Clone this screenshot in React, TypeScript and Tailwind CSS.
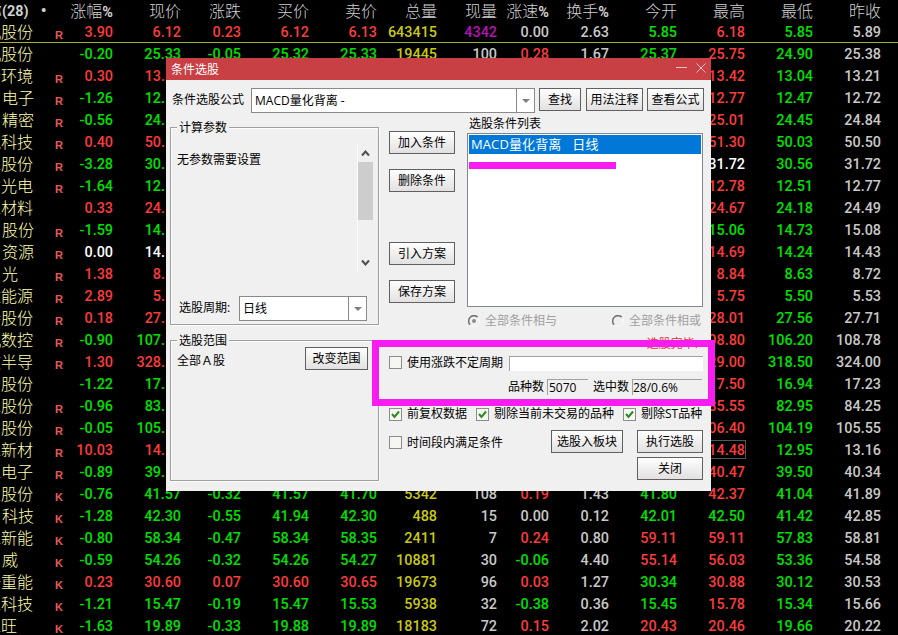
import React from 'react';
import { clsx, type ClassValue } from 'clsx';
import { twMerge } from 'tailwind-merge';

function cn(...inputs: ClassValue[]) {
  return twMerge(clsx(inputs));
}

const GRID =
  'grid grid-cols-[34px_29px_50px_68px_60px_68px_68px_60px_60px_52px_60px_68px_68px_68px_68px]';

const HEADERS = ['现价', '涨跌', '买价', '卖价', '总量', '现量', '涨速%', '换手%', '今开', '最高', '最低', '昨收'];

// name, mark, change %, price, high, low, previous close,
// then [change, bid, ask, volume, last volume, speed %, turnover %, open]
type Row = [string, string, string, string, string, string, string, string[]?];

const ROWS: Row[] = [
  ['机股份', 'R', '3.90', '6.12', '6.18', '5.85', '5.89', ['0.23', '6.12', '6.13', '643415', '4342', '0.00', '2.63', '5.85']],
  ['机股份', '', '-0.20', '25.33', '25.75', '24.90', '25.38', ['-0.05', '25.32', '25.33', '19445', '100', '0.28', '1.67', '25.37']],
  ['士环境', 'R', '0.30', '13.25', '13.42', '13.04', '13.21'],
  ['电子', 'R', '-1.26', '12.56', '12.77', '12.47', '12.72'],
  ['精密', 'R', '-0.56', '24.70', '25.01', '24.45', '24.84'],
  ['气科技', 'R', '0.40', '50.70', '51.30', '50.03', '50.50'],
  ['工股份', 'R', '-3.28', '30.68', '31.72', '30.56', '31.72'],
  ['才光电', 'R', '-1.64', '12.56', '12.78', '12.51', '12.77'],
  ['工材料', '', '0.33', '24.57', '24.67', '24.18', '24.49'],
  ['股份', 'R', '-1.59', '14.84', '15.06', '14.73', '15.08'],
  ['资源', 'R', '0.00', '14.43', '14.69', '14.24', '14.43'],
  ['光', 'R', '1.38', '8.84', '8.84', '8.63', '8.72'],
  ['达能源', 'R', '2.89', '5.69', '5.75', '5.50', '5.53'],
  ['特股份', 'R', '0.18', '27.76', '28.01', '27.56', '27.71'],
  ['机数控', 'R', '-0.90', '107.80', '108.80', '106.20', '108.78'],
  ['文半导', 'R', '1.30', '328.20', '329.00', '318.50', '324.00'],
  ['宁股份', '', '-1.22', '17.02', '17.50', '16.94', '17.23'],
  ['工股份', 'R', '-0.96', '83.44', '85.55', '82.95', '84.25'],
  ['方股份', 'R', '-0.05', '105.50', '106.40', '104.19', '105.55'],
  ['工新材', 'R', '10.03', '14.48', '14.48', '12.95', '13.16'],
  ['工电子', 'R', '-0.89', '39.98', '40.47', '39.50', '40.34'],
  ['业股份', 'K', '-0.76', '41.57', '42.37', '41.04', '41.89', ['-0.32', '41.57', '41.70', '5342', '108', '0.19', '1.43', '41.80']],
  ['科技', 'K', '-1.28', '42.30', '42.50', '41.42', '42.85', ['-0.55', '41.94', '42.30', '488', '15', '0.00', '0.12', '42.01']],
  ['工新能', 'K', '-0.80', '58.34', '59.11', '57.83', '58.81', ['-0.47', '58.34', '58.35', '2411', '7', '0.24', '0.80', '59.11']],
  ['威', 'K', '-0.59', '54.26', '56.03', '53.36', '54.58', ['-0.32', '54.26', '54.27', '10881', '30', '-0.06', '4.40', '55.14']],
  ['一重能', 'K', '0.23', '30.60', '30.88', '30.12', '30.53', ['0.07', '30.60', '30.65', '19673', '96', '0.03', '1.27', '30.34']],
  ['工科技', 'K', '-1.21', '15.47', '15.78', '15.34', '15.66', ['-0.19', '15.47', '15.53', '5938', '32', '-0.38', '0.36', '15.45']],
  ['工旺', 'K', '-1.63', '19.89', '20.46', '19.66', '20.22', ['-0.33', '19.88', '19.89', '18183', '72', '0.15', '2.02', '20.43']],
];

const GREY = 'text-[#c8c8c8]';

function tone(value: string, base = '0') {
  const diff = parseFloat(value) - parseFloat(base);
  if (diff > 0) return 'text-[#fa3c3c]';
  if (diff < 0) return 'text-[#00e000]';
  return 'text-white';
}

function Cell({ value, className }: { value?: string; className?: string }) {
  return <div className={cn('text-right', className)}>{value}</div>;
}

function QuoteRow({ row, first }: { row: Row; first: boolean }) {
  const [name, mark, pct, price, high, low, prev, rest] = row;
  const [chg, bid, ask, vol, last, speed, turnover, open] = rest ?? [];
  const short = name.length < 3 && name !== '工旺';
  return (
    <div className={cn(GRID, 'relative h-[22px] leading-6')}>
      <div className="overflow-hidden text-base leading-6 font-light text-[#ffffb0]">
        <div className={cn('whitespace-nowrap', short ? 'pl-0.5' : '-ml-[15px]')}>{name}</div>
      </div>
      <div className="pt-[3px] text-right font-['Liberation_Sans'] text-[11px] leading-[22px] font-bold text-[#e65a5a]">{mark}</div>
      <Cell value={pct} className={tone(pct)} />
      {/* rows under the dialog only show the whole part of the price */}
      <Cell value={rest ? price : price.split('.')[0] + '.'} className={cn(tone(price, prev), !rest && 'pr-4')} />
      <Cell value={chg} className={chg && tone(chg)} />
      <Cell value={bid} className={bid && tone(bid, prev)} />
      <Cell value={ask} className={ask && tone(ask, prev)} />
      <Cell value={vol} className="text-[#c8c814]" />
      <Cell value={last} className={last === '4342' ? 'text-[#b414b4]' : GREY} />
      <Cell value={speed} className={speed === '0.00' ? GREY : speed && tone(speed)} />
      <Cell value={turnover} className={GREY} />
      <Cell value={open} className={open && tone(open, prev)} />
      <Cell value={high} className={tone(high, prev)} />
      <Cell value={low} className={tone(low, prev)} />
      <Cell value={prev} className={GREY} />
      {first && <div className="absolute bottom-0 left-0 h-px w-[898px] bg-[#a8b428]" />}
      {pct === '10.03' && <div className="absolute top-px left-[700px] h-[19px] w-[46px] border border-[#505858]" />}
    </div>
  );
}

function Button({ children, className }: { children: React.ReactNode; className?: string }) {
  return (
    <button
      className={cn(
        'flex h-[23px] w-[66px] shrink-0 items-center justify-center border border-[#606060] bg-linear-to-b from-white to-[#e2e0e0] whitespace-nowrap',
        className
      )}
    >
      {children}
    </button>
  );
}

function Select({ children, className }: { children: React.ReactNode; className?: string }) {
  return (
    <div className={cn('flex h-[25px] shrink-0 border border-[#8a8a8a] bg-white', className)}>
      <div className="flex flex-1 items-center pl-[3px] whitespace-pre">{children}</div>
      <div className="flex w-[18px] items-center justify-center border-l border-[#8a8a8a]">
        <svg width="8" height="4" viewBox="0 0 8 4" className="fill-[#808080]">
          <path d="M0 0h8L4 4z" />
        </svg>
      </div>
    </div>
  );
}

function Check({ label, checked, className }: { label: string; checked?: boolean; className?: string }) {
  return (
    <label className={cn('flex items-center gap-[5px] whitespace-nowrap', className)}>
      <span className="flex size-[13px] shrink-0 items-center justify-center border border-[#8c8c8c] bg-[#f6f5f2]">
        {checked && (
          <svg width="9" height="9" viewBox="0 0 9 9" fill="none" stroke="#2a8c22" strokeWidth="2">
            <path d="M1 4l2.5 3L8 1.5" />
          </svg>
        )}
      </span>
      {label}
    </label>
  );
}

function Radio({ label, checked }: { label: string; checked?: boolean }) {
  return (
    <div className="flex items-center gap-[5px] text-[#a0a0a0]">
      <svg width="12" height="12" viewBox="0 0 12 12" fill="none">
        <path d="M2.2 9.8A5.3 5.3 0 0 1 9.8 2.2" stroke="#707070" strokeWidth="1.5" />
        <path d="M9.8 2.2A5.3 5.3 0 0 1 2.2 9.8" stroke="#fafafa" />
        {checked && <circle cx="6" cy="6" r="2" fill="#8c8c8c" />}
      </svg>
      <span>{label}</span>
    </div>
  );
}

function Group({ title, children, className }: { title: string; children: React.ReactNode; className?: string }) {
  return (
    <div className={cn('relative w-[209px] border border-[#a0a0a0] shadow-[inset_1px_1px_0_#fcfcfc,1px_1px_0_#fcfcfc]', className)}>
      <span className="absolute -top-2 left-1.5 bg-[#f0f0f0] px-0.5 leading-4">{title}</span>
      {children}
    </div>
  );
}

function Dialog() {
  return (
    <div className="absolute top-[58px] left-[166px] h-[433px] w-[545px] bg-[#f0f0f0] font-['Open_Sans','Noto_Sans_CJK_SC',sans-serif] text-xs leading-4 font-normal text-black">
      <div className="flex h-[22px] items-center bg-[#c84044] pt-px pl-[5px] text-white">
        <span className="flex-1">条件选股</span>
        <svg width="30" height="10" viewBox="0 0 30 10" fill="none" stroke="#f0c0c4" className="mr-[5px] -mt-1">
          <path d="M0 4.5h11M20.5.5l9 9M29.5.5l-9 9" />
        </svg>
      </div>

      <div className="flex pt-2 pl-1.5">
        <span className="w-[79px] pt-1">条件选股公式</span>
        <Select className="w-[284px]">MACD量化背离 -</Select>
        <Button className="ml-1 w-[42px]">查找</Button>
        <Button className="ml-[5px] w-[57px]">用法注释</Button>
        <Button className="ml-1 w-[57px]">查看公式</Button>
      </div>

      <div className="flex pl-1">
        <div className="pt-3.5">
          <Group title="计算参数" className="h-[198px]">
            <div className="flex h-[143px] justify-between pt-4 pr-[5px] pl-1.5">
              <span className="pt-2">无参数需要设置</span>
              <div className="flex h-[127px] w-4 flex-col items-center border-l border-white pt-1.5">
                <svg width="9" height="7" viewBox="0 0 9 7" fill="none" stroke="#505050" strokeWidth="2">
                  <path d="M1 5.5l3.5-4 3.5 4" />
                </svg>
                <div className="mt-[5px] h-[58px] w-full bg-[#cdcdcd]" />
                <svg width="9" height="7" viewBox="0 0 9 7" fill="none" stroke="#505050" strokeWidth="2" className="mt-[39px]">
                  <path d="M1 1.5l3.5 4 3.5-4" />
                </svg>
              </div>
            </div>
            <div className="flex pt-[25px] pl-2">
              <span className="w-[60px] pt-1">选股周期:</span>
              <Select className="w-32">日线</Select>
            </div>
          </Group>
          <Group title="选股范围" className="mt-[15px] h-[141px]">
            <div className="flex justify-between pt-1.5 pr-2.5 pl-1.5">
              <span className="pt-1.5">全部Ａ股</span>
              <Button className="w-[63px]">改变范围</Button>
            </div>
          </Group>
        </div>

        <div className="ml-2.5 w-[315px]">
          <div className="flex h-[194px]">
            <div className="flex flex-col pt-[18px]">
              <Button>加入条件</Button>
              <Button className="mt-[15px]">删除条件</Button>
              <Button className="mt-[50px]">引入方案</Button>
              <Button className="mt-[15px]">保存方案</Button>
            </div>
            <div className="ml-3 w-[236px]">
              <div className="h-5 pt-[3px] pl-0.5">选股条件列表</div>
              <div className="h-[174px] border border-[#828790] bg-white p-px">
                <div className="h-[19px] bg-[#0078d7] pl-0.5 text-[13px] leading-[19px] tracking-[0.1px] whitespace-pre text-white">
                  MACD量化背离{'  '}
                  <span className="ml-1">日线</span>
                </div>
                <div className="mt-2 h-[7px] w-[147px] bg-[#f81cf0]" />
              </div>
            </div>
          </div>
          <div className="flex h-[27px] items-center justify-between pr-[3px] pl-[79px]">
            <Radio label="全部条件相与" checked />
            <Radio label="全部条件相或" />
          </div>
          <div className="h-[22px] pt-0.5 pr-1.5 text-right text-[#e83030]">选股完毕.</div>
          <div className="flex h-[15px] items-start justify-between pr-px">
            <Check label="使用涨跌不定周期" className="h-[13px]" />
            <div className="h-[15px] w-[194px] border-t border-l border-[#a0a0a0] bg-white" />
          </div>
          <div className="flex items-center justify-end pt-[7px] pr-0.5">
            <span className="pt-px">品种数</span>
            <span className="ml-[3px] h-4 w-[41px] border-t border-l border-[#a0a0a0] pl-px leading-[15px]">5070</span>
            <span className="ml-[5px] pt-px">选中数</span>
            <span className="ml-[3px] h-4 w-[70px] border-t border-l border-[#a0a0a0] leading-[15px]">28/0.6%</span>
          </div>
          <div className="flex pt-[11px]">
            <Check label="前复权数据" checked className="w-[87px]" />
            <Check label="剔除当前未交易的品种" checked className="w-[147px]" />
            <Check label="剔除ST品种" checked className="w-20" />
          </div>
          <div className="flex items-center pt-2">
            <Check label="时间段内满足条件" className="pt-0.5" />
            <Button className="ml-12 w-[72px]">选股入板块</Button>
            <Button className="ml-3.5">执行选股</Button>
          </div>
          <Button className="mt-1 ml-[248px]">关闭</Button>
        </div>
      </div>
    </div>
  );
}

export default function App() {
  return (
    <div className="relative h-[635px] w-[898px] overflow-hidden bg-black font-['Roboto','Noto_Sans_CJK_SC',sans-serif] text-[14.4px] font-medium">
      <div className={cn(GRID, 'h-[21px] text-base leading-[23px] font-light text-[#d0d0d0]')}>
        <div className="col-span-2 flex whitespace-nowrap">
          <span className="-ml-3.5">称</span>
          <span className="text-[14.4px] font-bold">(28)</span>
          <span className="ml-3 text-base leading-[21px] font-bold">•</span>
        </div>
        <div className="text-right whitespace-nowrap">
          涨幅<span className="text-[14.4px] font-bold">%</span>
        </div>
        {HEADERS.map((label) => (
          <div key={label} className="text-right whitespace-nowrap">
            {label.replace('%', '')}
            {label.endsWith('%') && <span className="text-[14.4px] font-bold">%</span>}
          </div>
        ))}
      </div>
      {ROWS.map((row, i) => (
        <QuoteRow key={i} row={row} first={i === 0} />
      ))}

      <Dialog />

      {/* Marker frame around the result counters */}
      <div className="absolute top-[340px] left-[372px] h-[66px] w-[343px] border-[7px] border-[#f81cf0]" />
    </div>
  );
}
